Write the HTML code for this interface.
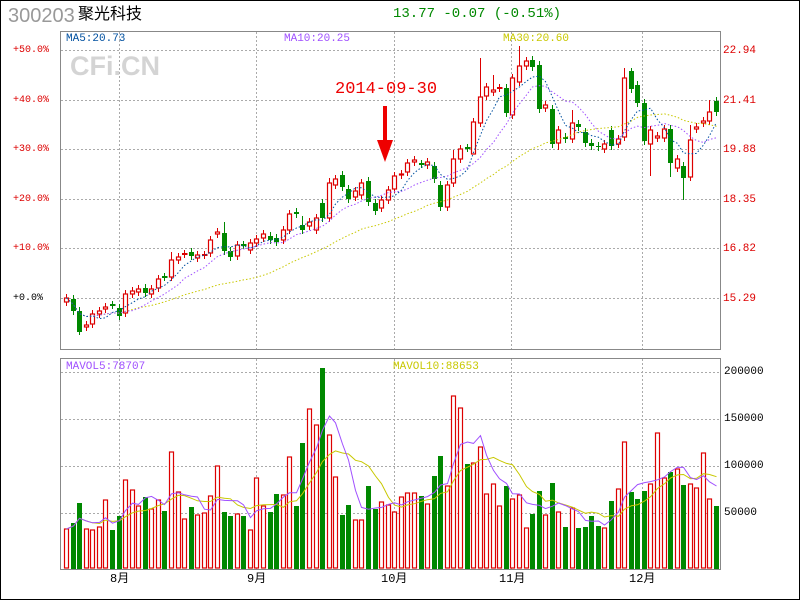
<!DOCTYPE html>
<html><head><meta charset="utf-8"><style>
html,body{margin:0;padding:0;background:#fff}
#w{position:relative;width:798px;height:598px;border:1px solid #000;overflow:hidden;font-family:"Liberation Mono","Noto Sans CJK SC",monospace}
.t{position:absolute;white-space:nowrap;line-height:1}
.r{color:#d00;font-size:10px}
svg{position:absolute;left:-1px;top:-1px}
</style></head><body><div id="w">
<svg id="s" width="800" height="600" xmlns="http://www.w3.org/2000/svg"></svg>
<div class="t" style="left:7px;top:5px;font-size:20px;color:#999;font-family:'Liberation Sans',sans-serif">300203</div>
<div class="t" style="left:77px;top:6px;font-size:16px;color:#000;font-family:'Liberation Sans','Noto Sans CJK SC',sans-serif">聚光科技</div>
<div class="t" style="left:392px;top:6px;font-size:14px;color:#080">13.77 -0.07 (-0.51%)</div>
<div class="t" style="left:69px;top:52px;font-size:27px;font-weight:bold;color:#d4d4d4;font-family:'Liberation Sans',sans-serif">CFi.CN</div>
<div class="t" style="left:334px;top:80px;font-size:17px;color:#e00">2014-09-30</div>
<div class="t" style="left:65px;top:33px;font-size:11px;color:#0050a0">MA5:20.73</div>
<div class="t" style="left:283px;top:33px;font-size:11px;color:#a050ff">MA10:20.25</div>
<div class="t" style="left:502px;top:33px;font-size:11px;color:#c8c800">MA30:20.60</div>
<div class="t r" style="left:12px;top:45px">+50.0%</div>
<div class="t r" style="left:12px;top:95px">+40.0%</div>
<div class="t r" style="left:12px;top:144px">+30.0%</div>
<div class="t r" style="left:12px;top:194px">+20.0%</div>
<div class="t r" style="left:12px;top:243px">+10.0%</div>
<div class="t r" style="left:12px;top:293px;color:#000">+0.0%</div>
<div class="t r" style="left:722px;top:45px;font-size:11px">22.94</div>
<div class="t r" style="left:722px;top:95px;font-size:11px">21.41</div>
<div class="t r" style="left:722px;top:144px;font-size:11px">19.88</div>
<div class="t r" style="left:722px;top:194px;font-size:11px">18.35</div>
<div class="t r" style="left:722px;top:243px;font-size:11px">16.82</div>
<div class="t r" style="left:722px;top:293px;font-size:11px">15.29</div>
<div class="t" style="left:65px;top:361px;font-size:11px;color:#a050ff">MAVOL5:78707</div>
<div class="t" style="left:392px;top:361px;font-size:11px;color:#c8c800">MAVOL10:88653</div>
<div class="t" style="left:723px;top:366px;font-size:11px;color:#000">200000</div>
<div class="t" style="left:723px;top:413px;font-size:11px;color:#000">150000</div>
<div class="t" style="left:723px;top:460px;font-size:11px;color:#000">100000</div>
<div class="t" style="left:723px;top:507px;font-size:11px;color:#000">50000</div>
<div class="t" style="left:109px;top:572px;font-size:12px;color:#000">8月</div>
<div class="t" style="left:246px;top:572px;font-size:12px;color:#000">9月</div>
<div class="t" style="left:380px;top:572px;font-size:12px;color:#000">10月</div>
<div class="t" style="left:498px;top:572px;font-size:12px;color:#000">11月</div>
<div class="t" style="left:628px;top:572px;font-size:12px;color:#000">12月</div>
</div>
<script>
var C=[[298,302,1],[299,311,0],[311,332,0],[325,327,1],[314,324,1],[311,314,1],[307,309,1],[305,305,0],[308,316,0],[294,313,1],
[291,294,1],[289,292,1],[288,293,0],[289,294,1],[279,288,1],[277,277,0],[260,277,1],[257,260,1],[254,254,1],[252,256,0],
[255,258,1],[255,255,1],[240,253,1],[232,234,1],[233,251,0],[251,257,0],[245,256,1],[245,245,0],[243,250,1],[239,243,1],
[234,238,1],[236,240,0],[238,242,0],[230,240,1],[214,230,1],[212,214,0],[225,230,0],[222,226,1],[218,230,1],[203,218,0],
[183,218,1],[179,185,1],[175,187,0],[189,199,0],[191,197,1],[183,195,1],[181,202,0],[203,211,0],[200,208,1],[190,200,1],
[176,189,1],[174,175,1],[163,172,1],[160,162,1],[164,164,0],[162,165,1],[166,179,0],[185,207,0],[185,207,1],[159,183,1],
[149,159,1],[148,148,0],[122,154,1],[97,123,1],[87,96,1],[90,92,1],[88,88,1],[88,113,0],[78,115,1],[66,82,1],
[61,66,1],[60,67,0],[65,109,0],[105,108,1],[109,144,0],[130,143,1],[137,139,0],[123,139,1],[124,127,0],[132,143,0],
[143,146,0],[146,147,0],[144,149,1],[130,146,0],[139,144,1],[78,137,1],[71,89,0],[85,103,0],[103,141,0],[130,144,1],
[136,138,1],[129,138,1],[129,163,0],[159,168,1],[166,178,0],[140,177,1],[127,129,1],[121,123,1],[112,121,1],[101,112,0]];
var V=[529,523,503,529,530,527,500,530,516,480,490,506,497,509,500,511,452,492,519,507,515,513,496,466,512,516,514,516,530,478,
506,512,494,495,457,506,443,409,425,368,435,477,515,505,520,520,486,509,502,505,512,497,493,493,496,504,476,456,486,396,
408,464,463,447,494,484,506,486,499,495,528,514,491,515,483,512,527,508,528,527,516,526,528,501,489,442,492,499,491,484,
433,478,472,469,485,484,488,453,499,506];
var W={63:58,69:46,85:68,86:68,92:177,94:200,89:176,62:140,40:178,59:150,36:216,24:222,16:252,2:335,9:290,65:75,75:150,77:110,95:125,98:100};
var s='';
function g(){
 for(var y of [50,100,149,199,248,298]) s+='<line x1="61" x2="720" y1="'+(y+.5)+'" y2="'+(y+.5)+'" stroke="#aaa" stroke-dasharray="2,2"/>';
 for(var y of [372,419,466,513]) s+='<line x1="61" x2="720" y1="'+(y+.5)+'" y2="'+(y+.5)+'" stroke="#aaa" stroke-dasharray="2,2"/>';
 for(var x of [119,256,394,511,642]){s+='<line x1="'+(x+.5)+'" x2="'+(x+.5)+'" y1="32" y2="349" stroke="#aaa" stroke-dasharray="2,2"/>';s+='<line x1="'+(x+.5)+'" x2="'+(x+.5)+'" y1="359" y2="569" stroke="#aaa" stroke-dasharray="2,2"/>';}
}
g();
s+='<rect x="60.5" y="31.5" width="660" height="318" fill="none" stroke="#888"/>';
s+='<rect x="60.5" y="358.5" width="660" height="211" fill="none" stroke="#888"/>';
var cl=[];
for(var i=0;i<100;i++){var c=C[i],x=Math.round(64+6.566*i)+.5,cx=x+2,t=c[0],b=c[1],up=c[2];
 cl.push(up?t:b);
 var col=up?'#d00':'#080';
 var wt=t-4,wb=b+4; if(W[i]){if(W[i]<t)wt=W[i];else wb=W[i];}
 s+='<line x1="'+cx+'" x2="'+cx+'" y1="'+wt+'" y2="'+wb+'" stroke="'+col+'"/>';
 if(b-t<1) s+='<line x1="'+(x-.5)+'" x2="'+(x+5)+'" y1="'+t+'" y2="'+t+'" stroke="'+col+'" stroke-width="2"/>';
 else if(up) s+='<rect x="'+x+'" y="'+t+'" width="4" height="'+(b-t)+'" fill="#fff" stroke="'+col+'" stroke-width="1.2"/>';
 else s+='<rect x="'+(x-.5)+'" y="'+t+'" width="5" height="'+(b-t)+'" fill="'+col+'"/>';
 var vt=V[i];
 if(up) s+='<rect x="'+x+'" y="'+vt+'" width="4" height="'+(568-vt)+'" fill="#fff" stroke="#d00" stroke-width="1.2"/>';
 else s+='<rect x="'+(x-.5)+'" y="'+vt+'" width="5" height="'+(569-vt)+'" fill="#080"/>';
}
function ma(a,n,st){var p='';for(var i=0;i<a.length;i++){var k=Math.max(0,i-n+1),sm=0;for(var j=k;j<=i;j++)sm+=a[j];var y=sm/(i-k+1);p+=(p?'L':'M')+(Math.round(64+6.566*i)+2.5)+','+y.toFixed(1);}return p;}
s+='<path d="'+ma(cl,30)+'" fill="none" stroke="#c8c800" stroke-dasharray="1.5,2"/>';
s+='<path d="'+ma(cl,10)+'" fill="none" stroke="#a050ff" stroke-dasharray="1.5,2"/>';
s+='<path d="'+ma(cl,5)+'" fill="none" stroke="#0050a0" stroke-dasharray="1.5,2"/>';
s+='<path d="'+ma(V,10)+'" fill="none" stroke="#c8c800"/>';
s+='<path d="'+ma(V,5)+'" fill="none" stroke="#a050ff"/>';
s+='<rect x="383" y="106" width="4" height="36" fill="#e00"/><path d="M377,140 L393,140 L385,162 Z" fill="#e00"/>';
document.getElementById('s').innerHTML=s;
</script>
</body></html>
